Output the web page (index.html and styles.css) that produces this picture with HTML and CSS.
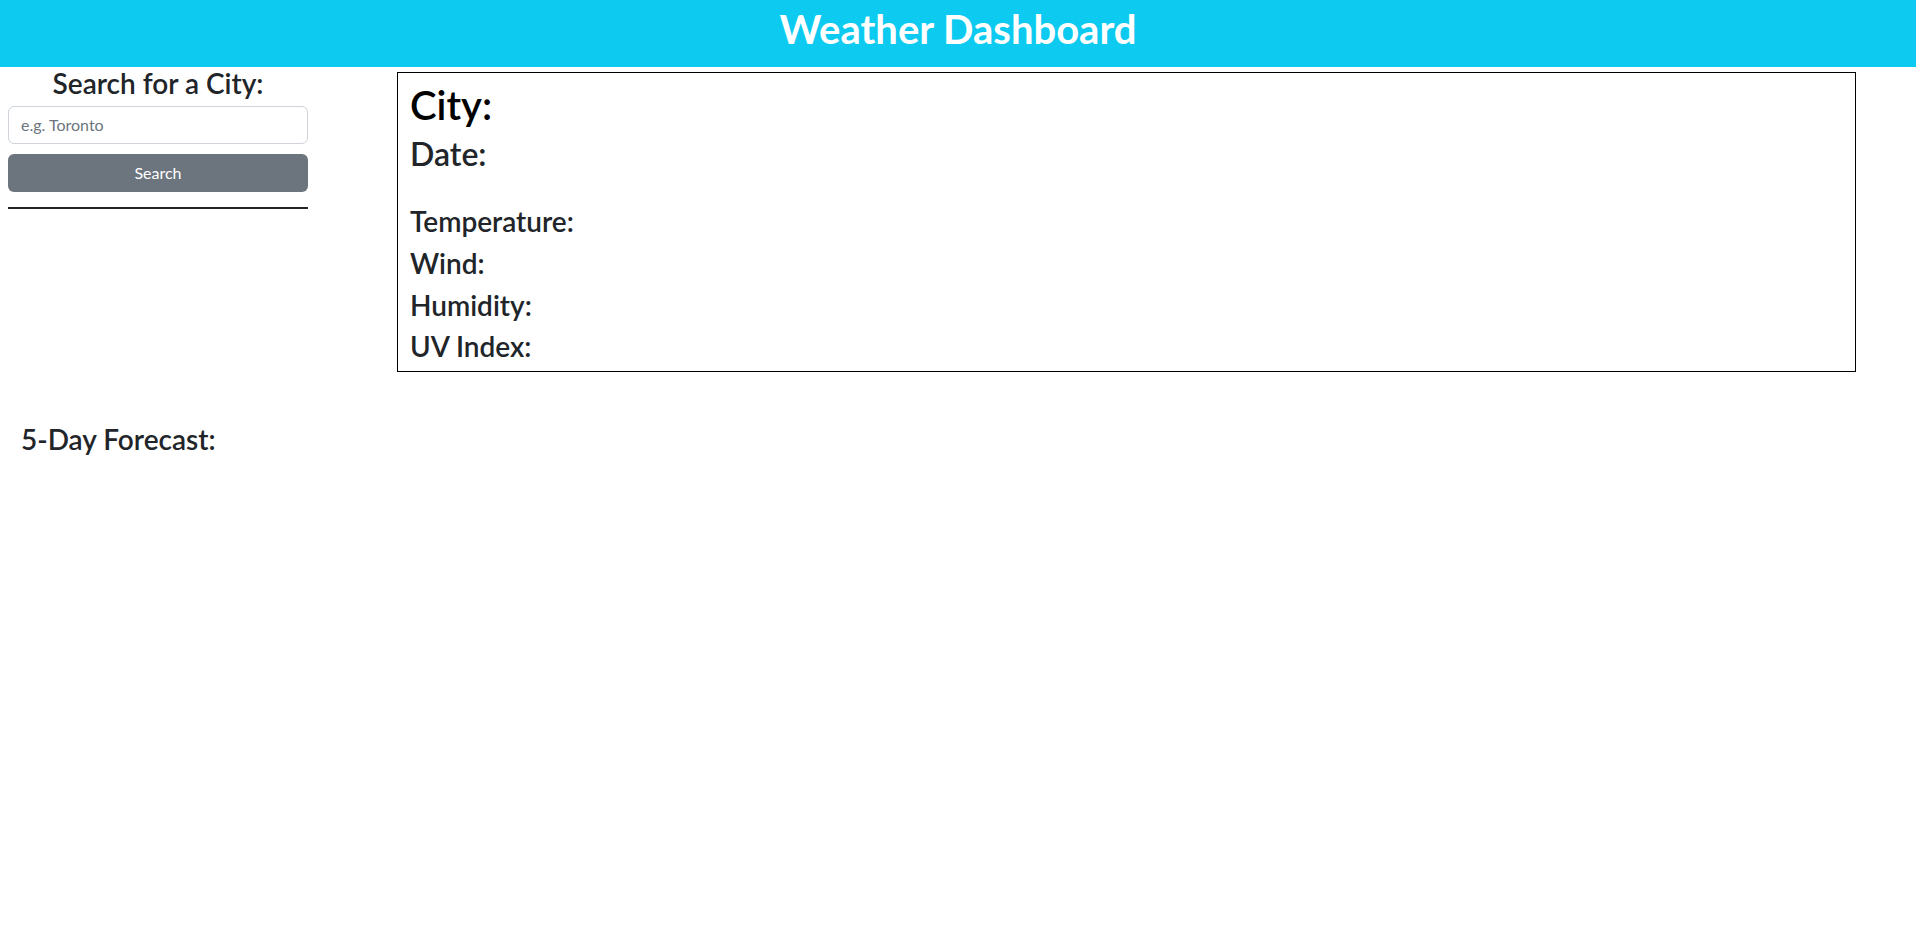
FILE: index.html
```html
<!DOCTYPE html>
<html lang="en">
<head>
<meta charset="utf-8">
<title>Weather Dashboard</title>
<link rel="stylesheet" href="styles.css">
</head>
<body>
<header class="topbar">
  <h1 class="topbar-title">Weather Dashboard</h1>
</header>
<div class="layout">
  <aside class="search-panel">
    <h3 class="search-heading">Search for a City:</h3>
    <input class="search-input" type="text" placeholder="e.g. Toronto">
    <button class="search-btn" type="button">Search</button>
    <hr class="search-divider">
  </aside>
  <section class="current-box">
    <h1 class="city-label">City:</h1>
    <h2 class="date-label">Date:</h2>
    <div class="stats">
      <h3 class="stat">Temperature:</h3>
      <h3 class="stat">Wind:</h3>
      <h3 class="stat">Humidity:</h3>
      <h3 class="stat">UV Index:</h3>
    </div>
  </section>
</div>
<section class="forecast">
  <h3 class="forecast-heading">5-Day Forecast:</h3>
</section>
</body>
</html>
```
FILE: styles.css
```css
* { box-sizing: border-box; }
html, body {
  margin: 0;
  padding: 0;
}
body {
  font-family: "Lato", "Noto Sans", sans-serif;
  color: #212529;
  background: #fff;
}
h1, h2, h3 {
  margin: 0;
  font-weight: 600;
  line-height: 1.2;
}
.topbar {
  background: #0dcaf0;
  height: 67px;
  display: flex;
  align-items: center;
  justify-content: center;
  padding-bottom: 10px;
}
.topbar-title {
  color: #fff;
  font-size: 40px;
  font-weight: 700;
}
.layout {
  display: flex;
  align-items: flex-start;
}
.search-panel {
  width: 308px;
  padding-left: 8px;
  display: flex;
  flex-direction: column;
}
.search-heading {
  font-size: 28px;
  text-align: center;
  margin-bottom: 5px;
}
.search-input {
  height: 38px;
  border: 1px solid #ced4da;
  border-radius: 6px;
  padding: 6px 12px;
  font-family: inherit;
  font-size: 16px;
  color: #212529;
}
.search-input::placeholder { color: #6c757d; }
.search-btn {
  margin-top: 10px;
  height: 38px;
  border: 0;
  border-radius: 6px;
  background: #6c757d;
  color: #fff;
  font-family: inherit;
  font-size: 16px;
}
.search-divider {
  margin: 15px 0 0;
  border: 0;
  border-top: 2px solid #212529;
}
.current-box {
  margin-top: 5px;
  margin-left: 89px;
  width: 1459px;
  height: 300px;
  border: 1px solid #000;
  padding: 8px 12px;
}
.city-label {
  font-size: 40px;
  color: #000;
  margin-bottom: 6px;
}
.date-label {
  font-size: 32px;
  margin-bottom: 32px;
}
.stat {
  font-size: 28px;
  margin-bottom: 8px;
}
.forecast {
  padding: 51px 21px;
}
.forecast-heading {
  font-size: 28px;
}
```
